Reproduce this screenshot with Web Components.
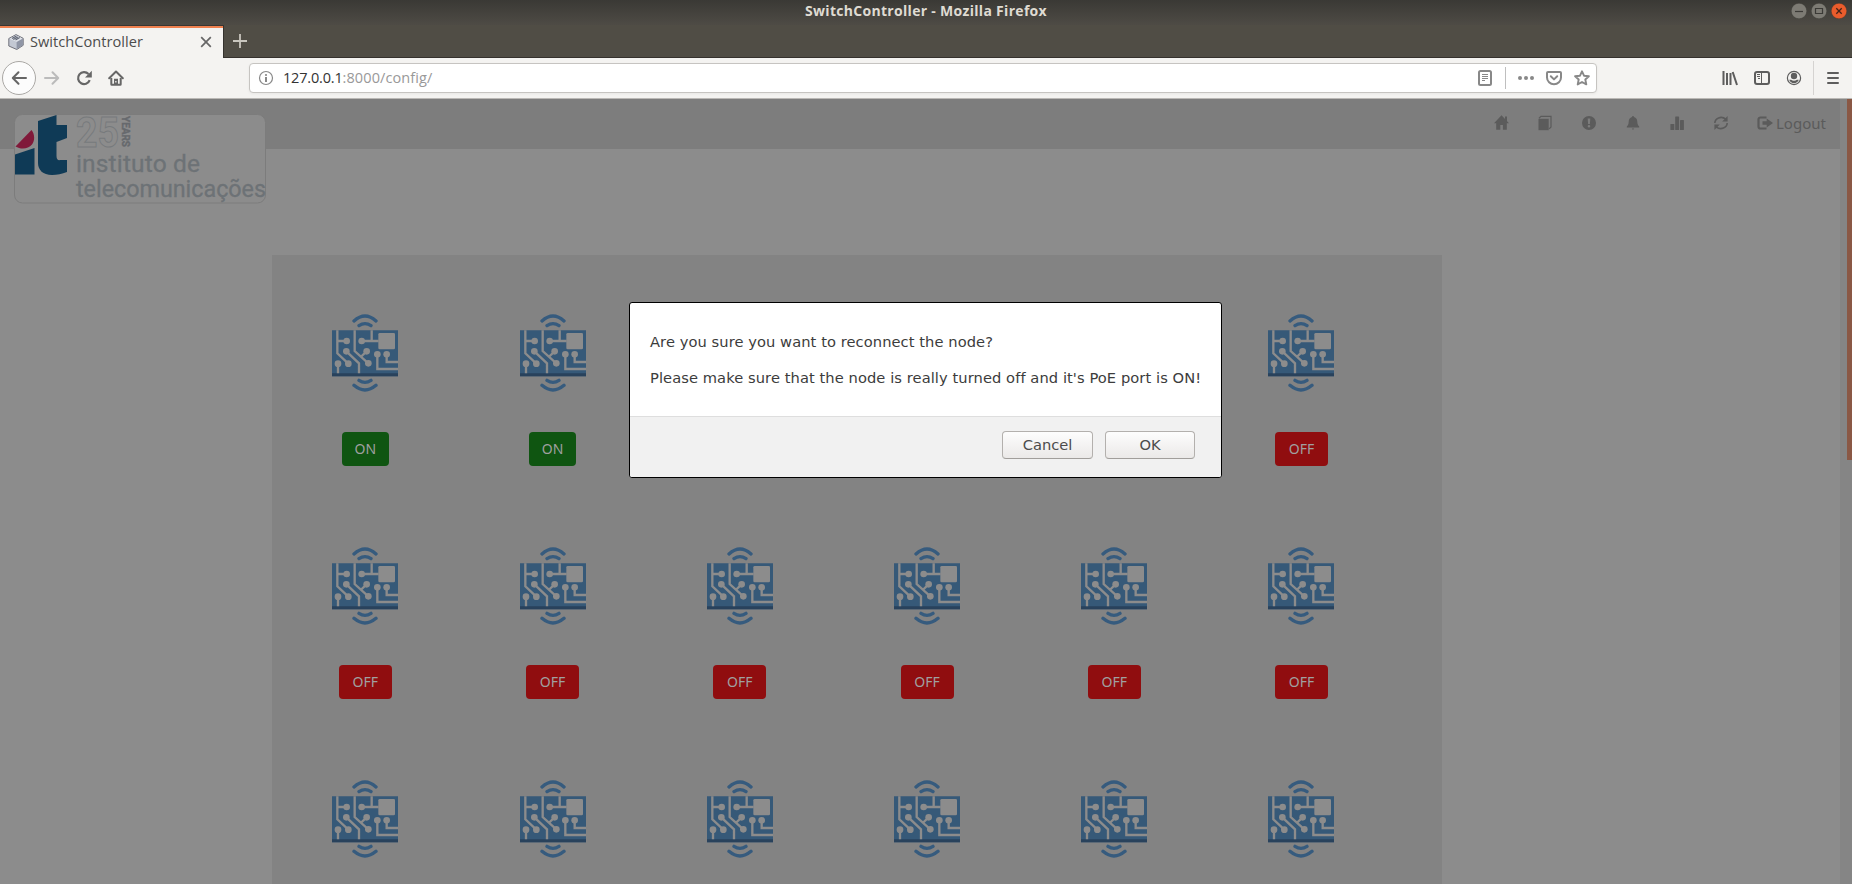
<!DOCTYPE html>
<html lang="en"><head><meta charset="utf-8"><title>SwitchController - Mozilla Firefox</title>
<style>html,body{margin:0;height:100%;overflow:hidden;background:#8c8c8c}</style></head>
<body><browser-window></browser-window>
<script>
const make=(name,html,after)=>customElements.define(name,class extends HTMLElement{
  connectedCallback(){ if(this.shadowRoot)return; const r=this.attachShadow({mode:'open'});
    r.innerHTML=typeof html==='function'?html(this):html; if(after)after(this,r); }
});

/* Text whose tracking is adjusted so that its line has the given width */
make('fit-text','<style>:host{display:inline-block;white-space:pre}span{display:inline-block}</style><span><slot></slot></span>',(el,r)=>{
  const s=r.querySelector('span'),w=+el.getAttribute('w'),n=el.textContent.length;
  s.style.letterSpacing=((w-s.getBoundingClientRect().width)/n)+'px';
});

const S='fill="none" stroke="currentColor" stroke-width="2" stroke-linecap="round" stroke-linejoin="round"';
const ICONS={
 back:`<path ${S} d="M15 8H2M7.5 2.2 1.8 8l5.700 5.800"/>`,
 forward:`<path ${S} d="M1 8H14M8.500 2.200 14.200 8l-5.700 5.800"/>`,
 reload:`<path fill="none" stroke="currentColor" stroke-width="2.200" d="M13.700 10.200A6 6 0 1 1 12.500 4"/><path fill="currentColor" d="M15.800.8v6.700H9z"/>`,
 house:`<path ${S} d="M1.200 8.300 8 1.500l6.800 6.800"/><path fill="currentColor" fill-rule="evenodd" d="M2.300 8h2v5.700H6V8.800h4v4.900h1.700V8h2v6.300a1.500 1.500 0 0 1-1.500 1.500H3.800a1.500 1.500 0 0 1-1.500-1.500zM7.200 11v1.500h1.300V11z"/>`,
 info:`<circle cx="8" cy="8" r="6.500" fill="none" stroke="currentColor" stroke-width="1.200"/><circle cx="8" cy="5" r="1.100" fill="currentColor"/><path fill="currentColor" d="M7 7h2v5H7z"/>`,
 reader:`<rect x="2" y="1" width="12" height="14" rx="1.500" fill="none" stroke="currentColor" stroke-width="2"/><path stroke="currentColor" d="M5 4.500h6M5 6.500h6M5 8.500h6M5 10.500h3"/>`,
 dots:`<g fill="currentColor"><circle cx="2" cy="8" r="2"/><circle cx="8" cy="8" r="2"/><circle cx="14" cy="8" r="2"/></g>`,
 pocket:`<path ${S} d="M2 2h12a1 1 0 0 1 1 1v4.500a7 6.700 0 0 1-14 0V3a1 1 0 0 1 1-1z"/><path ${S} d="M4.800 6.300 8 9.400l3.200-3.100"/>`,
 star:`<path fill="none" stroke="currentColor" stroke-linejoin="round" stroke-width="1.900" d="m8 1.300 2 4.400 4.900.5-3.600 3.300 1 4.900L8 12l-4.300 2.400 1-4.900L1.100 6.200 6 5.700z"/>`,
 library:`<path stroke="currentColor" stroke-width="2" d="M1.500 1v14M5 3v12M8.500 3v12M10.700 2l4.300 13"/>`,
 sidebar:`<rect x="1" y="2" width="14" height="12" rx="2" fill="none" stroke="currentColor" stroke-width="2"/><path stroke="currentColor" d="M3 4.500h3M3 6.500h3M4 8.500h2"/><path stroke="currentColor" d="M7.500 2v12"/>`,
 account:`<circle cx="8" cy="8" r="6.600" fill="none" stroke="currentColor" stroke-width="1.200"/><circle cx="8" cy="6" r="3.200" fill="currentColor"/><path fill="currentColor" d="M3.200 9.800h1.900c1.500 1.200 4.300 1.200 5.800 0h1.900c-.8 2.300-2.600 3.400-4.800 3.400s-4-1.100-4.800-3.400z"/>`,
 menu:`<path stroke="currentColor" stroke-width="2" stroke-linecap="round" d="M3 3h10M3 8h10M3 13h10"/>`,
 close:`<path stroke="currentColor" stroke-width="1.700" d="m3.200 3.200 9.600 9.600m0-9.600-9.600 9.600"/>`,
 plus:`<path stroke="currentColor" stroke-width="1.800" d="M8 1v14M1 8h14"/>`,
 cube:`<path fill="#c3c8d3" stroke="#65676f" stroke-width=".9" stroke-linejoin="round" d="M.8 4.500 8 .6l7.200 3.700v7L8.800 15.500.8 12z"/><path fill="#8f95a5" d="m8.600 8 6.300-3.500v6.700l-6.300 3.900z"/><path fill="#dfe2e8" d="M1.500 4.700 8 1.200l6.500 3.200L8.600 7.700z"/><path stroke="#5f6574" stroke-width="1.100" d="M4 4.500 8.500 2M5.300 5.400l4.500-2.500M7.500 6l4.200-2.400"/>`,
 ghome:`<path fill="currentColor" d="M8.500.3 16 8.200h-2.200v6.600H9.900V10H7.300v4.800H3.200V8.200H1zM12 1.500h2v4.500h-2z"/>`,
 gcopy:`<path fill="currentColor" d="M1.500 3.800h10.200v11.400H1.500z"/><path fill="none" stroke="currentColor" stroke-width="1.200" d="M2 3.200 4 1.400h10v10.500l-1.800 2"/>`,
 gwarn:`<path fill="currentColor" fill-rule="evenodd" d="M8 1a7 7 0 1 0 0 14A7 7 0 0 0 8 1zM6.700 3.500h2.600L8.900 9H7.100zM8 10a1.300 1.300 0 1 1 0 2.600A1.300 1.300 0 0 1 8 10z"/>`,
 gbell:`<path fill="currentColor" d="M7 2a1 1 0 1 1 2 0c2.300.6 3.200 2.500 3.300 4.700.1 2.500.9 3.600 1.900 4.900v1H1.800v-1c1-1.300 1.800-2.400 1.900-4.900C3.800 4.500 4.700 2.600 7 2zM6.800 13.500h2.400L8 14.900z"/>`,
 gchart:`<g fill="currentColor"><rect x="1.400" y="9" width="3.900" height="6" rx=".6"/><rect x="6.200" y="1.500" width="3.900" height="13.500" rx=".6"/><rect x="11" y="5" width="3.900" height="10" rx=".6"/></g>`,
 grefresh:`<path fill="none" stroke="currentColor" stroke-width="1.600" d="M1.800 8C2 3.500 8 .2 12.800 4.200M14.200 8C14 12.500 8 15.800 3.200 11.800"/><path fill="currentColor" d="M14.600 1v5.400H9.200zM1.400 15V9.600h5.400z"/>`,
 gout:`<path fill="none" stroke="currentColor" stroke-width="2.200" d="M9.500 2.500h-6a2 2 0 0 0-2 2v7a2 2 0 0 0 2 2h6"/><path fill="currentColor" d="M5.500 6.300h4.200V3.500L16 8l-6.300 4.500V9.700H5.500z"/>`
};
make('ui-icon',el=>{const z=el.getAttribute('size')||16;return `<style>:host{display:block;flex:none;width:${z}px;height:${z}px}svg{display:block}</style><svg width="${z}" height="${z}" viewBox="0 0 16 16">${ICONS[el.getAttribute('name')]}</svg>`});

make('title-bar',`<style>
:host{display:grid;grid-template-columns:1fr auto 1fr;height:25px;background:linear-gradient(#3a3935,#4e4b45);color:#dfdbd2;font:700 14px/22px "Open Sans","Noto Sans",sans-serif}
.t{height:22px}.b{display:flex;justify-content:flex-end;gap:4px;padding:3px 5px 0 0}
svg{display:block;width:16px;height:16px}
</style><span></span><fit-text class="t" w="242">SwitchController - Mozilla Firefox</fit-text>
<div class="b">
<svg viewBox="0 0 16 16"><circle cx="8" cy="8" r="7.800" fill="#7d7b74" stroke="#33322e" stroke-width=".4"/><path d="M4 8.500h8" stroke="#3b3a36" stroke-width="1.200"/></svg>
<svg viewBox="0 0 16 16"><circle cx="8" cy="8" r="7.800" fill="#7d7b74" stroke="#33322e" stroke-width=".4"/><path d="M4.500 5.500h7v5h-7z" fill="none" stroke="#3b3a36" stroke-width="1.200"/></svg>
<svg viewBox="0 0 16 16"><circle cx="8" cy="8" r="7.800" fill="#ea5c2c" stroke="#33322e" stroke-width=".4"/><path d="m5.300 5.300 5.400 5.400m0-5.400-5.400 5.400" stroke="#442318" stroke-width="1.300"/></svg>
</div>`);

make('tab-strip',`<style>
:host{display:flex;height:33px;background:#504d45;color:#c9c6be;font:14.600px/20px "Open Sans","Noto Sans",sans-serif}
.tab{box-sizing:border-box;width:224px;border-top:1px solid #3a3733;border-right:1px solid #35322e;background:#f4f3f1;box-shadow:inset 0 2px #f0814f;color:#4c4c4c;display:flex;align-items:center;padding:0 9px 0 8px}
.tab fit-text{margin-left:6px;padding-bottom:2px}.x{margin-left:auto;color:#666}
.rest{flex:1;border-bottom:1px solid #35312d;display:flex;align-items:center;padding-left:8px}
</style><div class="tab"><ui-icon name="cube"></ui-icon><fit-text w="113">SwitchController</fit-text><ui-icon class="x" name="close"></ui-icon></div>
<div class="rest"><ui-icon name="plus"></ui-icon></div>`);

make('nav-toolbar',`<style>
:host{display:flex;box-sizing:border-box;height:41px;background:#f4f3f1;border-bottom:1px solid #bab8b5;align-items:center;color:#666;font:14.500px/20px "Open Sans","Noto Sans",sans-serif}
.back{box-sizing:border-box;width:34px;height:34px;border:1px solid #aaa8a5;border-radius:50%;background:#fcfcfc;display:grid;place-items:center;margin-left:2px}
.f{margin-left:8px;color:#bbb}.r{margin-left:16px}.h{margin-left:16px}
.url{box-sizing:border-box;margin-left:125px;width:1348px;height:30px;border:1px solid #c6c4c1;border-radius:4px;background:#fff;display:flex;align-items:center;padding:0 6px 0 8px;color:#888;box-shadow:0 1px 3px #0000000d}
.a{margin-left:9px;color:#333}.p{color:#999}
.sp{flex:1}.v{width:1px;height:22px;background:#bfbfbf;margin:0 12px}
.right{display:flex;align-items:center;margin-left:125px;gap:16px;color:#5d5d5d}
.w{width:1px;height:34px;background:#d5d3d1;margin-left:-5px;margin-right:-5px}
</style>
<div class="back"><ui-icon name="back"></ui-icon></div><ui-icon class="f" name="forward"></ui-icon><ui-icon class="r" name="reload"></ui-icon><ui-icon class="h" name="house"></ui-icon>
<div class="url"><ui-icon name="info"></ui-icon><fit-text class="a" w="59.500">127.0.0.1</fit-text><fit-text class="p" w="90">:8000/config/</fit-text><span class="sp"></span>
<ui-icon name="reader"></ui-icon><span class="v"></span><ui-icon name="dots"></ui-icon><ui-icon name="pocket" style="margin:0 12px"></ui-icon><ui-icon name="star"></ui-icon></div>
<div class="right"><ui-icon name="library"></ui-icon><ui-icon name="sidebar"></ui-icon><ui-icon name="account"></ui-icon><span class="w"></span><ui-icon name="menu"></ui-icon></div>`);

make('site-logo',`<style>:host{display:block;box-sizing:border-box;width:252px;height:90px}svg{display:block;overflow:visible;font-family:Roboto,sans-serif}</style>
<svg width="252" height="90" viewBox="14 114 252 90">
<rect x="14.500" y="114.500" width="251" height="88.500" rx="8" fill="#8c8c8c" stroke="#7c7c7c"/>
<path fill="#0f3a56" d="M38 121 56.500 115v10H67v13l-10.500 4v14c0 4 2 4.500 4 4H67v12c-5 2-10 3-15 3-9 0-14-5-14-12z"/>
<path fill="#0f3a56" d="M15 154.500 34.500 148v26.500H15z"/>
<path fill="#80193a" d="M15.500 146.500 31.500 130c3.500 4 3.500 11 .5 14.500-4 5-11.500 5-16.500 2z"/>
<text x="76" y="146.500" font-size="43" font-weight="700" textLength="43" lengthAdjust="spacingAndGlyphs" fill="none" stroke="#777a7c" stroke-width="1">25</text>
<text transform="translate(121.500 116) rotate(90)" font-size="10.500" font-weight="700" textLength="31" lengthAdjust="spacingAndGlyphs" fill="#66696d" stroke="#66696d" stroke-width=".4">YEARS</text>
<g fill="#6d7276" stroke="#6d7276" stroke-width=".3" font-size="24.500"><text x="76" y="171.500" textLength="124" lengthAdjust="spacing">instituto de</text>
<text x="76" y="197" textLength="190" lengthAdjust="spacingAndGlyphs">telecomunicações</text></g></svg>`);

make('site-header',`<style>
:host{display:flex;position:relative;height:50px;background:#7d7d7d;justify-content:flex-end;align-items:flex-start;color:#5b5b5b;font:15px/22px "Noto Sans",sans-serif}
site-logo{position:absolute;left:14px;top:15px}
nav{display:flex;align-items:center;gap:28px;padding:13px 14px 0 0;height:22px}
.o{display:flex;align-items:center;gap:3px}
</style><site-logo></site-logo><nav><ui-icon name="ghome"></ui-icon><ui-icon name="gcopy"></ui-icon><ui-icon name="gwarn"></ui-icon><ui-icon name="gbell"></ui-icon><ui-icon name="gchart"></ui-icon><ui-icon name="grefresh"></ui-icon><span class="o"><ui-icon name="gout"></ui-icon><fit-text w="50">Logout</fit-text></span></nav>`);

make('sensor-node',el=>{const st=el.getAttribute('state'),on=st==='ON';return `<style>
:host{display:flex;flex-direction:column;align-items:center;height:232.600px}
svg{display:block;width:66px;height:78px}
button{all:unset;box-sizing:border-box;margin-top:40px;width:${on?47:53}px;height:34px;border-radius:4px;background:${on?'#0f5511':'#900d0f'};color:#a0a0a0;text-align:center;font:14px/34px "Noto Sans",sans-serif}
</style><svg viewBox="66 44 198 234">
<g fill="none" stroke="#365b7e" stroke-width="10" stroke-linecap="round"><path d="M132 65Q165 35 198 65M147 79Q165 67 183 79M132 258Q165 286 198 258M147 243Q165 255 183 243"/></g>
<path fill="#365978" d="M66 93h198v138H66z"/><path fill="#29425c" d="M66 222h198v9H66z"/>
<path fill="none" stroke="#8c8c8c" stroke-width="7" d="M82 93V162L115 193M82 125H110M84 193V222M134 93V155L175 192M152 173 170 156M155 125H206M185 93V125M109 156 147 192V222M202 165V209H264M230 165V188H264"/>
<g fill="#8c8c8c"><rect x="205" y="101" width="50" height="49" rx="4"/><circle cx="110" cy="125" r="10"/><circle cx="155" cy="125" r="10"/><circle cx="109" cy="156" r="10"/><circle cx="170" cy="156" r="10"/><circle cx="84" cy="193" r="10"/><circle cx="115" cy="193" r="10"/><circle cx="175" cy="192" r="10"/><circle cx="202" cy="165" r="10"/><circle cx="230" cy="165" r="10"/></g>
</svg>${st?`<button>${st}</button>`:''}`});

const states=['ON','ON',...Array(10).fill('OFF'),...Array(6).fill('')];
make('node-panel',`<style>
:host{display:block;box-sizing:border-box;width:1170px;height:629px;margin:106px 0 0 272px;background:#838383;padding-top:59.400px;overflow:hidden}
.g{display:grid;grid-template-columns:repeat(6,16%);margin-left:-.3px}
</style><div class="g">${states.map(s=>`<sensor-node state="${s}"></sensor-node>`).join('')}</div>`);

make('dialog-button',`<style>:host{display:block;box-sizing:border-box;width:91px;height:28px;border:1px solid #b3b0ad;border-bottom-color:#a19e9b;border-radius:4px;background:linear-gradient(#fdfdfd,#ebe9e8);color:#4c4c4c;text-align:center;font:14.667px/26px "DejaVu Sans",sans-serif}:host([ok]){width:90px}</style><slot></slot>`);

make('confirm-dialog',`<style>
:host{display:block;box-sizing:border-box;width:593px;height:176px;border:1px solid #000;border-radius:3px;overflow:hidden;background:#fff;color:#3c3c3c;font:14.667px/36px "DejaVu Sans",sans-serif}
.m{height:113px;box-sizing:border-box;padding:21px 0 0 20px;display:flex;flex-direction:column;align-items:flex-start}
.m fit-text{height:36px}
.f{box-sizing:border-box;height:61px;border-top:1px solid #dedede;background:#f1f1f1;display:flex;justify-content:flex-end;gap:12px;padding:14px 26px 0 0}
</style><div class="m"><fit-text w="343">Are you sure you want to reconnect the node?</fit-text><fit-text w="551">Please make sure that the node is really turned off and it's PoE port is ON!</fit-text></div>
<div class="f"><dialog-button>Cancel</dialog-button><dialog-button ok>OK</dialog-button></div>`);

make('scroll-bar',`<style>:host{display:flex;justify-content:flex-end;width:12px;background:#858585}i{width:5px;height:361px;background:#8a5845}</style><i></i>`);

make('browser-window',`<style>
:host{display:flex;flex-direction:column;position:relative;width:1852px;height:884px;overflow:hidden}
.view{display:flex;flex:1;min-height:0;background:#8c8c8c}.page{flex:1;min-width:0;overflow:hidden}
confirm-dialog{position:absolute;left:629px;top:302px}
</style><title-bar></title-bar><tab-strip></tab-strip><nav-toolbar></nav-toolbar>
<div class="view"><div class="page"><site-header></site-header><node-panel></node-panel></div><scroll-bar></scroll-bar></div><confirm-dialog></confirm-dialog>`);
</script></body></html>
